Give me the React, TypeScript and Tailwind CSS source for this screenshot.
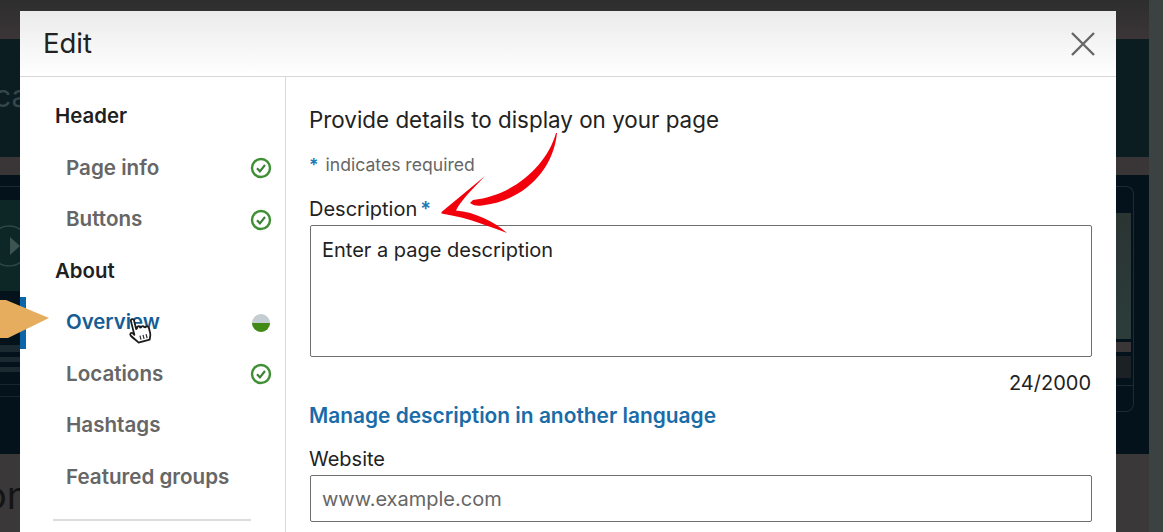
import { ReactNode } from 'react'

const FONT = "font-['Inter','Liberation_Sans',sans-serif]"

function CheckBadge() {
  return (
    <svg width="22" height="22" viewBox="0 0 22 22" fill="none">
      <circle cx="11" cy="11" r="9" stroke="#3f8f34" strokeWidth="2.400" />
      <path d="M7 11.300l2.900 3L15 8" stroke="#3a7f35" strokeWidth="2.100" />
    </svg>
  )
}

function HalfBadge() {
  return (
    <svg width="18" height="18" viewBox="0 0 18 18">
      <circle cx="9" cy="9" r="9" fill="#c4cdd2" />
      <path d="M0 9a9 9 0 0 0 18 0z" fill="#428a16" />
    </svg>
  )
}

function NavHeading({ children }: { children: ReactNode }) {
  return (
    <div className="h-[51.5px] flex items-center pl-[35px] text-[20.4px] font-semibold text-[#1f1f1f]">
      {children}
    </div>
  )
}

function NavItem({ label, active, badge }: { label: string; active?: boolean; badge?: ReactNode }) {
  return (
    <div
      className={
        active
          ? 'h-[51.5px] flex items-center justify-between pl-[40px] pr-[13px] border-l-[6px] border-[#0a66a8] text-[20.4px] font-semibold text-[#155d92]'
          : 'h-[51.5px] flex items-center justify-between pl-[46px] pr-[13px] text-[20.6px] font-semibold text-[#666666]'
      }
    >
      <span>{label}</span>
      <span className="w-[22px] flex justify-center">{badge}</span>
    </div>
  )
}

// page behind the dialog, mostly hidden, only the edges show
function Backdrop() {
  return (
    <div className="h-[532px] flex bg-[#3a3a3a] overflow-hidden">
      <div className="flex-1 flex flex-col">
        <div className="h-[39px] bg-gradient-to-b from-[#2e2e2e] to-[#3b3537]" />
        <div className="h-[118px] bg-[#0b1d21] flex justify-between">
          <div className="w-5 h-[118px] flex items-center overflow-hidden whitespace-nowrap text-[30px] text-[#33474a] pb-[4px]">
            <span className="-ml-[6px]">cat</span>
          </div>
        </div>
        <div className="h-[18px] bg-[#3a3537]" />
        <div className="h-[279px] bg-[#04131b] flex justify-between">
          <div className="w-5 flex flex-col">
            <div className="h-[12px] border-b border-[#1a2a30]" />
            <div className="h-[13px]" />
            <div className="h-[91px] bg-[#0d2727] flex items-center justify-end overflow-hidden">
              <svg width="20" height="44" viewBox="0 0 20 44" fill="none">
                <circle cx="9" cy="22" r="20" stroke="#2c4745" strokeWidth="1.500" />
                <path d="M10 13l10 9-10 9z" fill="#3d5552" />
              </svg>
            </div>
            <div className="h-[54px]" />
            <div className="h-[7px] bg-[#1a2a30]" />
            <div className="h-[5px]" />
            <div className="h-[5px] bg-[#1a2a30]" />
            <div className="h-[5px]" />
            <div className="h-[5px] bg-[#1a2a30]" />
            <div className="h-[13px] border-b border-[#16262c]" />
            <div className="h-[12px] border-b border-[#16262c]" />
          </div>
          <div className="w-[33px] pt-[11px]">
            <div className="w-[18px] h-[226px] rounded-r-[8px] border-r border-y border-[#1d2c33] flex flex-col">
              <div className="h-[26px]" />
              <div className="h-[126px] bg-gradient-to-b from-[#2a3433] to-[#2b3d3b] w-[15px]" />
              <div className="h-[3px]" />
              <div className="h-[10px] bg-[#3a3537] w-[15px]" />
              <div className="h-[4px]" />
              <div className="h-[22px] bg-[#1c2126] w-[15px]" />
              <div className="h-[8px] border-b border-[#1d2c33]" />
            </div>
          </div>
        </div>
        <div className="flex-1 bg-[#3a3838] flex">
          <div className="w-5 h-[77px] flex items-center overflow-hidden whitespace-nowrap text-[38px] text-[#141414] pt-[6px]">
            <span className="-ml-[16px]">on</span>
          </div>
        </div>
      </div>
      <div className="w-[14px] bg-[#3a4342]" />
    </div>
  )
}

export default function App() {
  return (
    <div className={`relative h-[532px] w-[1163px] overflow-hidden ${FONT}`}>
      <Backdrop />

      <div className="absolute left-[20px] top-[11px] w-[1096px] h-[560px] bg-white rounded-t-[5px] flex flex-col">
        <div className="h-[66px] shrink-0 flex items-center justify-between pl-[23px] pr-[20px] border-b border-[#d8d6da] bg-gradient-to-b from-[#ebebeb] to-white">
          <span className="text-[27.5px] text-[#222222]">Edit</span>
          <svg width="26" height="26" viewBox="0 0 26 26" fill="none">
            <path d="M2 2l22 22M24 2L2 24" stroke="#666666" strokeWidth="2.400" />
          </svg>
        </div>

        <div className="flex-1 flex">
          <div className="w-[266px] shrink-0 border-r border-[#d9d9d9] flex flex-col pt-[14px]">
            <NavHeading>Header</NavHeading>
            <NavItem label="Page info" badge={<CheckBadge />} />
            <NavItem label="Buttons" badge={<CheckBadge />} />
            <NavHeading>About</NavHeading>
            <NavItem label="Overview" active badge={<HalfBadge />} />
            <NavItem label="Locations" badge={<CheckBadge />} />
            <NavItem label="Hashtags" />
            <NavItem label="Featured groups" />
            <div className="ml-[33px] mr-[34px] mt-[16px] border-t-2 border-[#dcdcdc]" />
          </div>

          <div className="flex-1 flex flex-col pl-[23px] pr-[24px]">
            <div className="h-[27px] mt-[29px] text-[22.4px] leading-[27px] text-[#222222]">
              Provide details to display on your page
            </div>
            <div className="mt-[22px] h-[20px] text-[17.6px] leading-[20px] text-[#666666]">
              <span className="text-[#1c78b0] font-semibold mr-[7px]">*</span>indicates required
            </div>
            <div className="mt-[22px] h-[24px] text-[20px] leading-[24px] text-[#222222]">
              Description<span className="text-[#1c78b0] font-semibold ml-[3px]">*</span>
            </div>
            <div className="mt-[4px] h-[132px] ml-px border border-[#6f6f6f] rounded-[2px] px-[11px] pt-[11px] text-[20px] leading-[26px] text-[#222222]">
              Enter a page description
            </div>
            <div className="mt-[14px] h-[24px] pr-px text-right text-[20px] leading-[24px] text-[#222222]">24/2000</div>
            <div className="mt-[8px] h-[26px] text-[20.9px] leading-[26px] font-semibold text-[#1a6ca8]">
              Manage description in another language
            </div>
            <div className="mt-[18px] h-[24px] text-[20px] leading-[24px] text-[#222222]">Website</div>
            <div className="mt-[4px] h-[47px] ml-px border border-[#6f6f6f] rounded-[2px] px-[11px] flex items-center text-[20px] text-[#666666]">
              www.example.com
            </div>
          </div>
        </div>
      </div>

      {/* video annotations drawn on top of the dialog */}
      <svg className="absolute left-0 top-0 pointer-events-none" width="1163" height="532" viewBox="0 0 1163 532">
        <path d="M0 300H6L49 318 8 338H0z" fill="#e7ad5f" />
        <path
          d="M556 133C547 165 515 195 473 200L470 203C474 206 478 206 482 205.500C522 201 553 172 557 133z"
          fill="#f2000c"
        />
        <path
          d="M441.500 212L485 176C472 190 461 200 456 210.500C475 212 495 222 507 233C490 227 470 218 441.500 213.500z"
          fill="#f2000c"
        />
        <g transform="translate(127 316) rotate(-14 11 14) scale(1.050)">
          <path
            d="M6 3.500c0-2 3-2 3 0V12l1-.5c0-2 3-2 3 0l1 .2c.5-1.500 3-1.200 3 .5l1 .3c1-1 3-.5 3 1.500v5c0 3-1.500 4-2 6H8c-1-2-3-4-5.500-8-1-2 1-3.200 2.500-1.800L6 17z"
            fill="#ffffff"
            stroke="#1a1a1a"
            strokeWidth="1.700"
            strokeLinejoin="round"
          />
          <path d="M11 19v4M14 19v4M17 19v4" stroke="#333333" strokeWidth="1.200" />
        </g>
      </svg>
    </div>
  )
}
